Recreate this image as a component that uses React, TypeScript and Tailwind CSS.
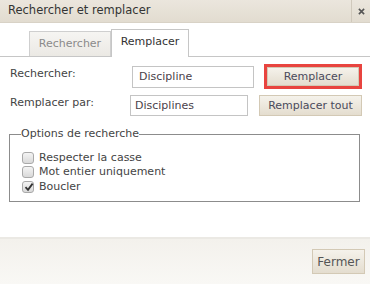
import React from "react";

function Box({ checked }: { checked?: boolean }) {
  return (
    <span className="relative inline-block w-[12px] h-[12px] rounded-[3px] border border-[#a9a9a9] bg-gradient-to-b from-[#f4f4f4] to-[#d9d9d9] mr-[5px]">
      {checked && (
        <svg viewBox="0 0 12 12" className="absolute left-[0px] top-[-1px] w-[12px] h-[12px]">
          <path d="M2.5 6.2 L5 8.8 L9.6 2.6" fill="none" stroke="#333" strokeWidth="1.8" />
        </svg>
      )}
    </span>
  );
}

const btn =
  "border border-[#d3c9b5] bg-gradient-to-b from-[#f5f2eb] to-[#e4ddcf] text-[#4a4a5c] text-[11px] leading-none";

export default function App() {
  const options = [
    { label: "Respecter la casse", checked: false },
    { label: "Mot entier uniquement", checked: false },
    { label: "Boucler", checked: true },
  ];

  return (
    <div
      className="w-[370px] h-[284px] bg-white flex flex-col text-[#444] text-[11px]"
      style={{ fontFamily: '"DejaVu Sans", Verdana, sans-serif' }}
    >
      {/* barre de titre */}
      <div className="h-[23px] flex items-stretch bg-gradient-to-b from-[#ebe6dd] to-[#e2dcd0] border-b border-[#d8d2c6]">
        <div className="flex-1 flex items-center pl-[8px] text-[11.5px] text-[#333]">
          Rechercher et remplacer
        </div>
        <div className="w-[19px] border-l border-[#d0c9bc] flex items-center justify-center">
          <svg viewBox="0 0 8 8" className="w-[7px] h-[7px]">
            <path d="M1 1 L7 7 M7 1 L1 7" stroke="#555" strokeWidth="1.8" />
          </svg>
        </div>
      </div>

      {/* onglets */}
      <div className="mt-[6px] flex items-end pl-[29px] border-b border-[#c6c6c6] h-[28px]">
        <div className="h-[25px] w-[82px] flex items-center justify-center bg-gradient-to-b from-[#f6f5f2] to-[#ebe9e4] border border-b-0 border-[#cfcfcf] text-[#8a8a8a] pt-[1px]">
          Rechercher
        </div>
        <div className="h-[28px] w-[78px] -mb-px flex items-center justify-center bg-white border border-b-0 border-[#c6c6c6] text-[#333] pb-[3px]">
          Remplacer
        </div>
      </div>

      {/* formulaire */}
      <div className="flex items-center mt-[7px] h-[25px]">
        <span className="w-[132px] pl-[10px] -mt-[5px]">Rechercher:</span>
        <input
          readOnly
          value="Discipline"
          className="w-[122px] h-[22px] border border-[#c4c4c4] px-[6px] text-[11px] text-[#4a3f4a] outline-none"
        />
        <div className="ml-[10px] border-[3px] border-[#e8443f]">
          <button className={`${btn} w-[92px] h-[19px] block`}>Remplacer</button>
        </div>
      </div>
      <div className="flex items-center mt-[6px] h-[21px]">
        <span className="w-[130px] pl-[10px] -mt-[4px]">Remplacer par:</span>
        <input
          readOnly
          value="Disciplines"
          className="w-[118px] h-[21px] border border-[#c4c4c4] px-[4px] text-[11px] text-[#4a3f4a] outline-none"
        />
        <button className={`${btn} ml-[11px] w-[103px] h-[21px]`}>Remplacer tout</button>
      </div>

      <fieldset className="mx-[9px] w-[351px] mt-[10px] h-[76px] border border-[#8c8c8c] pl-[12px] pt-[4px]">
        <legend className="px-0 ml-[-1px] text-[#444]">Options de recherche</legend>
        <div className="flex flex-col mt-[4px]">
          {options.map((o) => (
            <div key={o.label} className="flex items-center h-[14.5px] text-[#444]">
              <Box checked={o.checked} />
              {o.label}
            </div>
          ))}
        </div>
      </fieldset>

      {/* pied */}
      <div className="mt-auto h-[47px] border-t-[2px] border-[#ebe9e4] bg-gradient-to-b from-[#f3f1ec] to-[#f9f8f5] flex justify-end items-start pr-[5px] pt-[10px]">
        <button className={`${btn} w-[53px] h-[25px] text-[12px] text-[#555]`}>Fermer</button>
      </div>
    </div>
  );
}
